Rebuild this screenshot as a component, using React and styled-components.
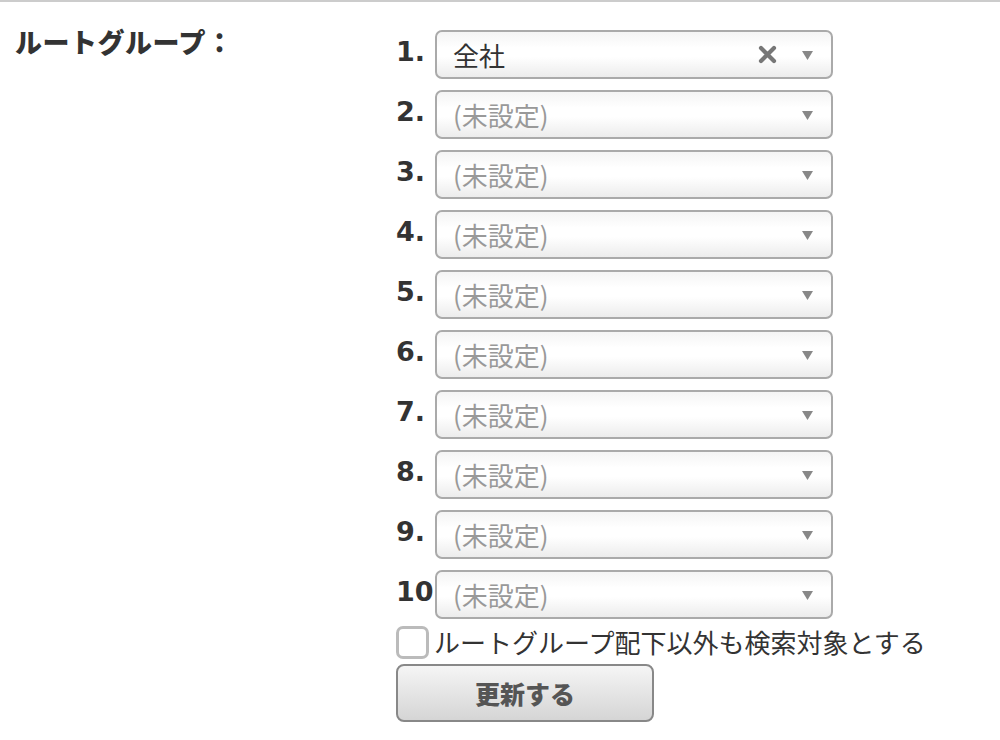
import React, { useState } from 'react'
import styled, { createGlobalStyle } from 'styled-components'

const GlobalStyle = createGlobalStyle`
	body {
		margin: 0;
		background: #fff;
		font-family: "Noto Sans CJK JP", "Noto Sans", sans-serif;
		color: #333;
	}
`

const groups = ['全社', null, null, null, null, null, null, null, null, null]

const ClearIcon = () => (
	<svg width="19" height="19" viewBox="0 0 19 19">
		<path d="M3 3 L16 16 M16 3 L3 16" stroke="#777" strokeWidth="4.2" strokeLinecap="round" />
	</svg>
)

const ArrowIcon = () => (
	<svg width="11" height="9" viewBox="0 0 11 9">
		<path d="M0 0 H11 L5.5 9 Z" fill="#888" />
	</svg>
)

const App = () => {
	const [checked, setChecked] = useState(false)

	return (
		<Page>
			<GlobalStyle />
			<Label>ルートグループ：</Label>
			<Fields>
				{groups.map((g, i) => (
					<Row key={i}>
						<Num>{i + 1}.</Num>
						<Select>
							<Value $empty={!g}>{g || '(未設定)'}</Value>
							{g && <Clear><ClearIcon /></Clear>}
							<Arrow><ArrowIcon /></Arrow>
						</Select>
					</Row>
				))}
				<CheckRow onClick={() => setChecked(!checked)}>
					<Box $checked={checked} />
					<CheckText>ルートグループ配下以外も検索対象とする</CheckText>
				</CheckRow>
				<Button>更新する</Button>
			</Fields>
		</Page>
	)
}

const Page = styled.div`
	display: flex;
	border-top: 2px solid #ccc;
	min-height: 738px;
	box-sizing: border-box;
`

const Label = styled.div`
	width: 381px;
	padding: 23px 0 0 15px;
	font-size: 27px;
	line-height: 34px;
	font-weight: 900;
	letter-spacing: 0.5px;
	color: #333;
	box-sizing: content-box;
`

const Fields = styled.div`
	display: flex;
	flex-direction: column;
	padding-top: 28px;
`

const Row = styled.div`
	display: flex;
	align-items: flex-start;
	height: 49px;
	margin-bottom: 11px;
`

const Num = styled.div`
	width: 39px;
	white-space: nowrap;
	font-family: "DejaVu Sans", sans-serif;
	font-weight: 700;
	font-size: 27px;
	line-height: 30px;
	padding-top: 7px;
	color: #333;
`

const Select = styled.div`
	position: relative;
	display: flex;
	align-items: center;
	width: 398px;
	height: 49px;
	box-sizing: border-box;
	border: 2px solid #aaa;
	border-radius: 7px;
	background: linear-gradient(to bottom, #f4f4f4 0%, #fff 35%, #fff 55%, #ececec 100%);
	padding: 0 18px 0 16px;
`

const Value = styled.div`
	flex: 1;
	font-size: 26px;
	line-height: 30px;
	color: ${p => (p.$empty ? '#999' : '#333')};
`

const Clear = styled.span`
	display: flex;
	margin-right: 25px;
`

const Arrow = styled.span`
	display: flex;
	margin-top: 2px;
`

const CheckRow = styled.label`
	display: flex;
	align-items: center;
	height: 36px;
	margin-top: -6px;
	cursor: pointer;
`

const Box = styled.span`
	width: 33px;
	height: 33px;
	box-sizing: border-box;
	border: 3px solid #bbb;
	border-radius: 7px;
	background: ${p => (p.$checked ? '#ddd' : '#fff')};
	margin-right: 5px;
`

const CheckText = styled.span`
	font-size: 26px;
	line-height: 34px;
	color: #333;
`

const Button = styled.button`
	margin-top: 4px;
	width: 258px;
	height: 58px;
	border: 2px solid #888;
	border-radius: 8px;
	background: linear-gradient(to bottom, #f5f5f5, #d5d5d5);
	font-family: "Noto Sans CJK JP", sans-serif;
	font-size: 25px;
	font-weight: 900;
	color: #555;
	cursor: pointer;
`

export default App
